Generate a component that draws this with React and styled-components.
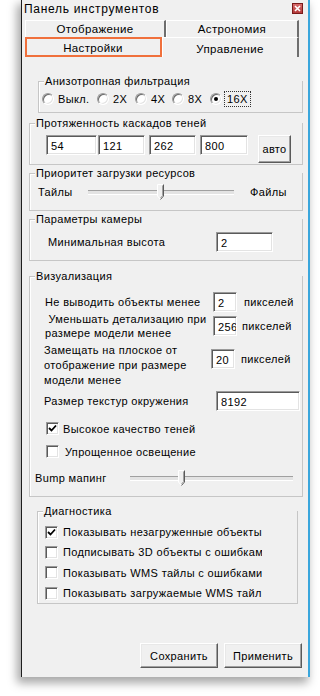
import React from 'react';
import styled, { createGlobalStyle } from 'styled-components';

const Global = createGlobalStyle`
  html, body { margin: 0; padding: 0; background: #fff; }
  body { font-family: "Liberation Sans", Arial, sans-serif; font-size: 11px; letter-spacing: 0.35px; color: #000; }
  * { box-sizing: border-box; }
`;

const Page = styled.div`
  width: 320px;
  height: 696px;
  padding-left: 21px;
  overflow: hidden;
`;

const Window = styled.div`
  width: 289px;
  height: 677px;
  background: #f0f0f0;
  border-left: 1px solid #1e1e1e;
  border-right: 2px solid #3aa6dc;
  box-shadow: -3px 5px 9px 1px rgba(0, 0, 0, 0.35);
  display: flex;
  flex-direction: column;
`;

const TitleBar = styled.div`
  height: 18px;
  display: flex;
  align-items: center;
  justify-content: space-between;
  padding: 0 5px 0 2px;
  font-size: 12px;
  letter-spacing: 0.7px;
`;

const CloseBtn = styled.div`
  width: 11px;
  height: 11px;
  border: 1px solid #7a1a1a;
  background: linear-gradient(#d86a6a, #b33a3a);
  display: flex;
  align-items: center;
  justify-content: center;
  margin-top: -2px;
`;

const Tabs = styled.div`
  margin-top: 2px;
  padding-left: 3px;
  display: flex;
  flex-direction: column;
`;

const TabRow = styled.div`
  display: flex;
  height: ${(p) => p.$h}px;
`;

const Tab = styled.div`
  width: ${(p) => p.$w}px;
  height: 100%;
  display: flex;
  align-items: center;
  justify-content: center;
  background: #f0f0f0;
  border-top: 1px solid #fff;
  border-left: 1px solid #fff;
  border-right: 2px solid #6e6e6e;
  outline: ${(p) => (p.$marked ? '2px solid #f0703c' : 'none')};
  outline-offset: -2px;
  font-size: 11.5px;
  padding-top: ${(p) => p.$pt || 0}px;
`;

const Panel = styled.div`
  flex: 1;
  display: flex;
  flex-direction: column;
`;

const Group = styled.div`
  margin-top: ${(p) => p.$mt}px;
  margin-left: ${(p) => p.$ml}px;
  width: ${(p) => p.$w}px;
  height: ${(p) => p.$h}px;
  border: 1px solid #c6c6c6;
  box-shadow: inset 1px 1px 0 #fff;
  display: flex;
  flex-direction: column;
`;

const Caption = styled.div`
  display: table;
  margin: -7px 0 0 5px;
  padding: 0 2px 0 1px;
  background: #f0f0f0;
  line-height: 13px;
  height: 13px;
  white-space: nowrap;
`;

const RadioRow = styled.div`
  margin: 4px 0 0 3px;
  display: grid;
  grid-template-columns: 55px 38px 37px 38px auto;
  align-items: center;
  height: 14px;
`;

const Option = styled.div`
  display: flex;
  align-items: center;
  gap: 4px;
`;

const Radio = styled.span`
  width: 12px;
  height: 12px;
  border-radius: 50%;
  border: 1px solid;
  border-color: #9a9a9a #fff #fff #9a9a9a;
  box-shadow: inset 1px 1px 0 #6a6a6a, inset -1px -1px 0 #e3e3e3;
  background: #fff;
  display: flex;
  align-items: center;
  justify-content: center;
  flex: none;
  &::after {
    content: '';
    width: 4px;
    height: 4px;
    border-radius: 50%;
    background: ${(p) => (p.$on ? '#000' : 'transparent')};
  }
`;

const Focus = styled.span`
  outline: 1px dotted #333;
  outline-offset: 1px;
  padding: 0 1px;
`;

const CascadeRow = styled.div`
  margin: 5px 0 0 16px;
  display: grid;
  grid-template-columns: 52px 51px 51px 58px 33px;
  align-items: start;
`;

const Field = styled.input`
  width: ${(p) => p.$w}px;
  height: ${(p) => p.$h || 20}px;
  border: 1px solid;
  border-color: #9a9a9a #fff #fff #9a9a9a;
  box-shadow: inset 1px 1px 0 #5a5a5a, inset -1px -1px 0 #e3e3e3;
  background: #fff;
  font: 11px "Liberation Sans", Arial, sans-serif;
  letter-spacing: 0.35px;
  color: #000;
  padding: 1px 0 0 4px;
  margin: 0;
  outline: none;
  align-self: ${(p) => p.$self || 'auto'};
  margin-top: ${(p) => p.$mt || 0}px;
`;

const Button = styled.button`
  width: ${(p) => p.$w}px;
  height: ${(p) => p.$h}px;
  background: #f0f0f0;
  border: 1px solid;
  border-color: #fff #5a5a5a #5a5a5a #fff;
  box-shadow: inset -1px -1px 0 #a0a0a0, inset 1px 1px 0 #e8e8e8;
  font: 11px "Liberation Sans", Arial, sans-serif;
  letter-spacing: 0.35px;
  color: #000;
  padding: 0;
  margin: 0;
`;

const SliderRow = styled.div`
  margin: ${(p) => p.$mt}px 0 0 ${(p) => p.$ml}px;
  display: grid;
  grid-template-columns: ${(p) => p.$cols};
  align-items: center;
  height: 16px;
`;

const Track = styled.div`
  position: relative;
  height: 16px;
  display: flex;
  align-items: center;
  &::before {
    content: '';
    flex: 1;
    height: 3px;
    border-top: 1px solid #a0a0a0;
    border-bottom: 1px solid #fff;
    background: #e3e3e3;
  }
`;

const Thumb = styled.svg`
  position: absolute;
  top: 0;
`;

const FormRow = styled.div`
  margin: ${(p) => p.$mt}px 0 0 ${(p) => p.$ml}px;
  display: grid;
  grid-template-columns: ${(p) => p.$cols};
  align-items: ${(p) => p.$align || 'center'};
`;

const Label = styled.div`
  line-height: ${(p) => p.$lh || 14}px;
  white-space: nowrap;
  margin-left: ${(p) => p.$ml || 0}px;
  margin-top: ${(p) => p.$mt || 0}px;
`;

const CheckRow = styled.div`
  margin: ${(p) => p.$mt}px 0 0 ${(p) => p.$ml}px;
  height: ${(p) => p.$h || 13}px;
  display: flex;
  align-items: center;
  gap: ${(p) => p.$gap || 5}px;
`;

const Box = styled.span`
  width: 13px;
  height: 13px;
  flex: none;
  border: 1px solid;
  border-color: #9a9a9a #fff #fff #9a9a9a;
  box-shadow: inset 1px 1px 0 #5a5a5a, inset -1px -1px 0 #e3e3e3;
  background: #fff;
  display: flex;
  align-items: center;
  justify-content: center;
`;

const CheckText = styled.span`
  white-space: nowrap;
  overflow: hidden;
  max-width: ${(p) => p.$max || 300}px;
`;

const Footer = styled.div`
  margin-top: 39px;
  display: flex;
  justify-content: flex-end;
  gap: 6px;
  padding-right: 6px;
`;

const SliderThumb = ({ left }) => (
  <Thumb width="7" height="16" viewBox="0 0 7 16" style={{ left }}>
    <path d="M0.5 0.5 H6.5 V12 L3.5 15.5 L0.5 12 Z" fill="#f0f0f0" stroke="#fff" />
    <path d="M6.5 0.5 V12 L3.5 15.5" fill="none" stroke="#5a5a5a" />
    <path d="M5.5 1.5 V11.6 L3.5 14" fill="none" stroke="#a0a0a0" />
  </Thumb>
);

const Check = ({ on }) => (
  <Box>
    {on && (
      <svg width="9" height="9" viewBox="0 0 9 9">
        <path d="M1 4 L3.5 6.5 L8 1.5" fill="none" stroke="#000" strokeWidth="1.8" />
      </svg>
    )}
  </Box>
);

export default function App() {
  return (
    <Page>
      <Global />
      <Window>
        <TitleBar>
          <span>Панель инструментов</span>
          <CloseBtn>
            <svg width="7" height="7" viewBox="0 0 7 7">
              <path d="M1 1 L6 6 M6 1 L1 6" stroke="#fff" strokeWidth="1.6" />
            </svg>
          </CloseBtn>
        </TitleBar>
        <Tabs>
          <TabRow $h={17}>
            <Tab $w={141}>Отображение</Tab>
            <Tab $w={133}>Астрономия</Tab>
          </TabRow>
          <TabRow $h={20}>
            <Tab $w={137} $marked>Настройки</Tab>
            <Tab $w={137} $pt={2}>Управление</Tab>
          </TabRow>
        </Tabs>
        <Panel>
          <Group $mt={24} $ml={16} $w={265} $h={32}>
            <Caption>Анизотропная фильтрация</Caption>
            <RadioRow>
              <Option><Radio />Выкл.</Option>
              <Option><Radio />2X</Option>
              <Option><Radio />4X</Option>
              <Option><Radio />8X</Option>
              <Option><Radio $on /><Focus>16X</Focus></Option>
            </RadioRow>
          </Group>

          <Group $mt={10} $ml={7} $w={274} $h={42}>
            <Caption>Протяженность каскадов теней</Caption>
            <CascadeRow>
              <Field $w={51} readOnly value="54" />
              <Field $w={47} readOnly value="121" />
              <Field $w={47} readOnly value="262" />
              <Field $w={48} readOnly value="800" />
              <Button $w={33} $h={28}>авто</Button>
            </CascadeRow>
          </Group>

          <Group $mt={8} $ml={7} $w={274} $h={38}>
            <Caption>Приоритет загрузки ресурсов</Caption>
            <SliderRow $mt={4} $ml={8} $cols="50px 146px 16px auto">
              <span>Тайлы</span>
              <Track><SliderThumb left={69} /></Track>
              <span />
              <span>Файлы</span>
            </SliderRow>
          </Group>

          <Group $mt={8} $ml={7} $w={274} $h={42}>
            <Caption>Параметры камеры</Caption>
            <FormRow $mt={6} $ml={18} $cols="168px 57px">
              <Label>Минимальная высота</Label>
              <Field $w={57} readOnly value="2" />
            </FormRow>
          </Group>

          <Group $mt={15} $ml={7} $w={274} $h={221}>
            <Caption>Визуализация</Caption>
            <FormRow $mt={9} $ml={15} $cols="168px 24px auto">
              <Label>Не выводить объекты менее</Label>
              <Field $w={24} readOnly value="2" />
              <Label $ml={7}>пикселей</Label>
            </FormRow>
            <FormRow $mt={0} $ml={15} $cols="168px 24px auto">
              <Label>
                &nbsp;Уменьшать детализацию при
                <br />
                размере модели менее
              </Label>
              <Field $w={24} readOnly value="256" />
              <Label $ml={5}>пикселей</Label>
            </FormRow>
            <FormRow $mt={3} $ml={14} $cols="167px 24px auto" $align="start">
              <Label $lh={15}>
                Замещать на плоское от
                <br />
                отображение при размере
                <br />
                модели менее
              </Label>
              <Field $w={24} $mt={6} readOnly value="20" />
              <Label $ml={6} $mt={9}>пикселей</Label>
            </FormRow>
            <FormRow $mt={3} $ml={14} $cols="172px 84px">
              <Label>Размер текстур окружения</Label>
              <Field $w={84} readOnly value="8192" />
            </FormRow>
            <CheckRow $mt={11} $ml={16} $gap={4}>
              <Check on />
              <span>Высокое качество теней</span>
            </CheckRow>
            <CheckRow $mt={10} $ml={16} $gap={6}>
              <Check />
              <span>Упрощенное освещение</span>
            </CheckRow>
            <SliderRow $mt={12} $ml={5} $cols="95px 163px">
              <span>Bump мапинг</span>
              <Track><SliderThumb left={48} /></Track>
            </SliderRow>
          </Group>

          <Group $mt={14} $ml={15} $w={261} $h={93}>
            <Caption>Диагностика</Caption>
            <CheckRow $mt={4} $ml={7} $h={20}>
              <Check on />
              <CheckText $max={199}>Показывать незагруженные объекты</CheckText>
            </CheckRow>
            <CheckRow $mt={0} $ml={7} $h={20}>
              <Check />
              <CheckText $max={199}>Подписывать 3D объекты с ошибками</CheckText>
            </CheckRow>
            <CheckRow $mt={0} $ml={7} $h={21}>
              <Check />
              <CheckText $max={199}>Показывать WMS тайлы с ошибками</CheckText>
            </CheckRow>
            <CheckRow $mt={0} $ml={7} $h={20}>
              <Check />
              <CheckText $max={199}>Показывать загружаемые WMS тайлы</CheckText>
            </CheckRow>
          </Group>

          <Footer>
            <Button $w={78} $h={25}>Сохранить</Button>
            <Button $w={78} $h={25}>Применить</Button>
          </Footer>
        </Panel>
      </Window>
    </Page>
  );
}
